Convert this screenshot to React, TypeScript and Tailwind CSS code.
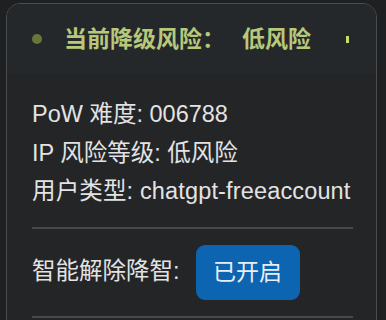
export default function App() {
  return (
    <div className="h-[320px] overflow-hidden bg-[#1f2022] pt-[3px] px-[6px] font-['Liberation_Sans','Noto_Sans_CJK_SC',sans-serif]">
      <div className="w-[371px] h-[340px] rounded-[14px] border-[1.5px] border-[#4b4c4f] bg-[#242527] overflow-hidden">
        {/* Header */}
        <div className="h-[70px] flex items-center justify-between pl-[25px] pr-[27px] bg-[#25282a]">
          <div className="flex items-center">
            <span className="w-[10px] h-[10px] rounded-full bg-[#67773a]" />
            <span className="ml-[22px] text-[23px] font-bold text-[#b7c87b] leading-none">
              当前降级风险：
            </span>
            <span className="ml-[17px] text-[23px] font-bold text-[#b7c87b] leading-none">
              低风险
            </span>
          </div>
          <span className="w-[3px] h-[7px] bg-[#c9da6e]" />
        </div>

        {/* Details */}
        <div className="pl-[25px] pr-[23px] pt-[21px] text-[23.5px] text-[#e3e3e3]">
          <div className="leading-[38.5px]">PoW 难度: 006788</div>
          <div className="leading-[38.5px]">IP 风险等级: 低风险</div>
          <div className="leading-[38.5px] whitespace-nowrap tracking-[0.15px]">
            用户类型: chatgpt-freeaccount
          </div>

          <div className="mt-[16px] h-[2px] bg-[#48494c]" />

          <div className="mt-[16px] flex items-center">
            <span>智能解除降智:</span>
            <span className="ml-[16px] w-[104px] h-[55px] rounded-[9px] bg-[#0d64b0] text-[#e8eef6] text-[23px] flex items-center justify-center">
              已开启
            </span>
          </div>

          <div className="mt-[16px] h-[2px] bg-[#48494c]" />
        </div>
      </div>
    </div>
  );
}
